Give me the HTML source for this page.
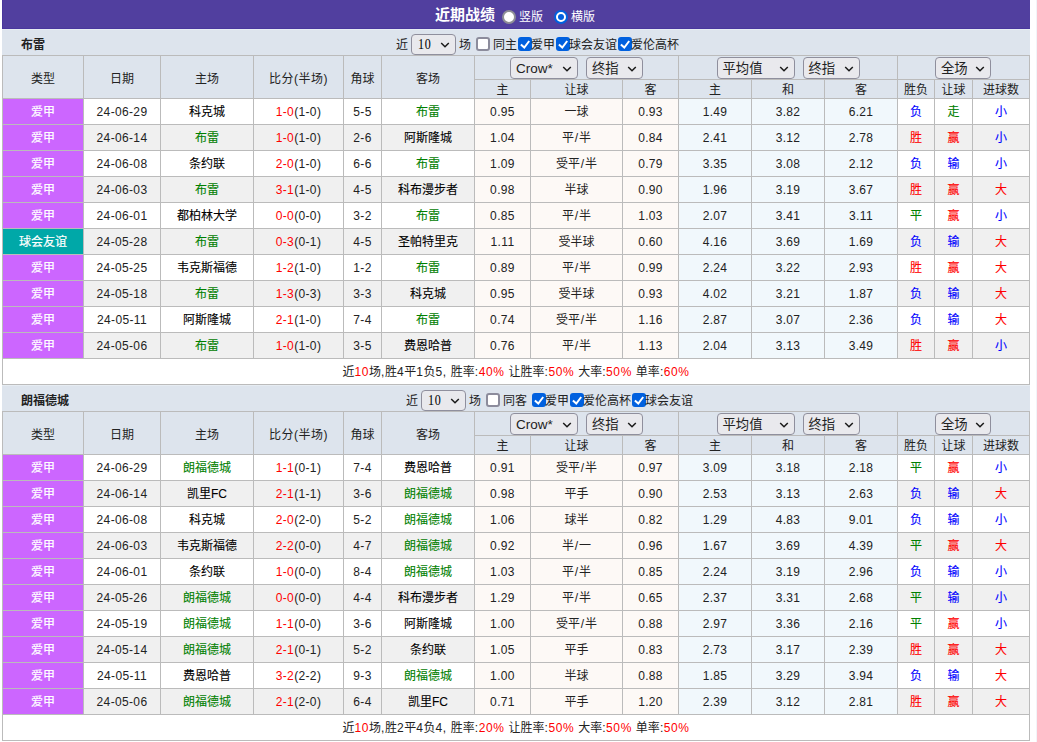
<!DOCTYPE html>
<html lang="zh-CN"><head><meta charset="utf-8"><title>近期战绩</title>
<style>
html,body{margin:0;padding:0;background:#fff;}
body{font-family:"Liberation Sans","Noto Sans CJK SC",sans-serif;font-size:12px;color:#222;width:1037px;height:742px;overflow:hidden;position:relative;}
.wrap{position:absolute;left:2px;top:0;width:1028px;}
.title{height:29px;background:#513f9f;color:#fff;position:relative;box-shadow:inset 1px -1px 0 #49379d;}
.title .tt{position:absolute;left:433px;top:4px;font-size:15px;font-weight:bold;line-height:22px;}
.title .rl{position:absolute;top:8px;font-size:12px;line-height:18px;}
.title .rd{position:absolute;top:10px;width:14px;height:14px;border-radius:50%;background:#fff;box-sizing:border-box;border:2px solid #8e8e96;}
.title .rd.on{border:2px solid #0060df;background:#fff;}
.title .rd.on i{position:absolute;left:2px;top:2px;width:6px;height:6px;border-radius:50%;background:#0060df;}
.team{height:26px;background:linear-gradient(#e6ecf2 0,#e6ecf2 1px,#dde4ed 1px,#dde4ed 100%);position:relative;}
.team .tn{position:absolute;left:19px;top:7px;line-height:18px;font-size:12px;}
.ctl{position:absolute;top:2px;height:26px;display:flex;align-items:center;white-space:nowrap;}
.lb{display:inline-block;line-height:18px;position:relative;top:1px;}
.sel{display:inline-block;box-sizing:border-box;border:1px solid #8f8f9d;border-radius:4px;background:#e9e9ed;position:relative;vertical-align:middle;}
.sel.sm{height:21px;margin:3px 3px 0 3px;align-self:flex-start;}
.sel.big{height:22px;margin-top:1px;}
.sel .st{position:absolute;left:5px;top:0;}
.sel .ar{position:absolute;right:5px;}
.sel.sm .st{line-height:19px;color:#000;font-family:"Liberation Serif","Noto Sans CJK SC",serif;font-size:14px;left:6px;letter-spacing:0.8px;transform:scaleX(0.86);transform-origin:0 50%;}
.sel.sm .ar{top:7px;}
.sel.big .st{line-height:21px;font-size:13.33px;}
.sel.big .st.la{font-size:13.5px;}
.sel.big .ar{top:8px;}
.cb{display:inline-block;width:14px;height:14px;box-sizing:border-box;border:2px solid #8c8c9c;border-radius:3px;background:#fff;vertical-align:middle;margin:0 3px 0 5px;}
.cb.on{border:none;background:#0060df;margin:0 -1px 0 1px;}
.cb svg{display:block;}
table.t{border-collapse:collapse;table-layout:fixed;width:1028px;}
table.t td,table.t th{border:1px solid #bbb;text-align:center;padding:0;font-weight:normal;overflow:hidden;white-space:nowrap;}
table.t th{background:#dde4ed;}
tr.h1{height:24px;}
tr.h2{height:19px;}
tr.h2 th{line-height:16px;padding-top:2px;}
table.t td{height:24px;line-height:24px;padding-top:1px;background:#fff;}
tr.alt td{background:#f0f0f0;}
table.t td.lg1{background:#cc66ff;color:#fff;}
table.t td.lg2{background:#00a8a8;color:#fff;}
table.t td.o1{background:#fdf9f6;}
table.t td.o2{background:#f1f8fc;}
.v,.n{letter-spacing:0.35px;padding-right:1px;}
.g{color:#008000;}
.r{color:#f00;}
.b{color:#00f;}
table.t td.g{color:#008000;}table.t td.r{color:#f00;}table.t td.b{color:#00f;}
tr.sum td{background:#fff;}
.ls{letter-spacing:0.6px;}
th.hs{text-align:center;}
.sel.m2{margin-left:8px;}

.sel.m1{margin-left:-1px;}
.sl{padding:0 0.85px;}
.edge{position:absolute;left:1036px;top:0;width:1px;height:742px;background:#f2f4f8;}
td.tm{color:#000;-webkit-text-stroke:0.1px #000;}
td.tm.g{-webkit-text-stroke:0.1px #008000;}
table.t td.lg1,table.t td.lg2{-webkit-text-stroke:0.2px #fff;}
.hl{letter-spacing:0.5px;}
table.t td.g{-webkit-text-stroke:0.1px #008000;}table.t td.r{-webkit-text-stroke:0.1px #f00;}table.t td.b{-webkit-text-stroke:0.1px #00f;}

</style></head><body>
<div class="wrap">
<div class="title"><span class="tt">近期战绩</span><span class="rd" style="left:500px"></span><span class="rl" style="left:517px">竖版</span><span class="rd on" style="left:552px"><i></i></span><span class="rl" style="left:569px">横版</span></div>
<div class="team "><b class="tn">布雷</b><div class="ctl" style="left:394px"><span class="lb">近</span><span class="sel sm" style="width:45px"><span class="st ">10</span><svg class="ar" viewBox="0 0 10 6" width="10" height="6"><path d="M1.2 1 L5 4.8 L8.8 1" fill="none" stroke="#1a1a1a" stroke-width="1.5"/></svg></span><span class="lb l2">场</span><span class="cb"></span><span class="lb c">同主</span><span class="cb on"><svg viewBox="0 0 14 14" width="14" height="14"><path d="M2.9 7.4 L6.3 10.6 L11.2 4" fill="none" stroke="#fff" stroke-width="2"/></svg></span><span class="lb d">爱甲</span><span class="cb on"><svg viewBox="0 0 14 14" width="14" height="14"><path d="M2.9 7.4 L6.3 10.6 L11.2 4" fill="none" stroke="#fff" stroke-width="2"/></svg></span><span class="lb d">球会友谊</span><span class="cb on"><svg viewBox="0 0 14 14" width="14" height="14"><path d="M2.9 7.4 L6.3 10.6 L11.2 4" fill="none" stroke="#fff" stroke-width="2"/></svg></span><span class="lb d">爱伦高杯</span></div></div><table class="t"><colgroup><col style="width:81px"><col style="width:77px"><col style="width:93px"><col style="width:90px"><col style="width:38px"><col style="width:93px"><col style="width:56px"><col style="width:92px"><col style="width:56px"><col style="width:73px"><col style="width:73px"><col style="width:73px"><col style="width:37px"><col style="width:38px"><col style="width:57px"></colgroup><tr class="h1"><th rowspan="2">类型</th><th rowspan="2">日期</th><th rowspan="2">主场</th><th rowspan="2" class="hl">比分(半场)</th><th rowspan="2">角球</th><th rowspan="2">客场</th><th colspan="3" class="hs"><span class="sel big" style="width:68px"><span class="st la">Crow*</span><svg class="ar" viewBox="0 0 10 6" width="10" height="6"><path d="M1.2 1 L5 4.8 L8.8 1" fill="none" stroke="#1a1a1a" stroke-width="1.5"/></svg></span><span class="sel big m2" style="width:57px"><span class="st ">终指</span><svg class="ar" viewBox="0 0 10 6" width="10" height="6"><path d="M1.2 1 L5 4.8 L8.8 1" fill="none" stroke="#1a1a1a" stroke-width="1.5"/></svg></span></th><th colspan="3" class="hs"><span class="sel big" style="width:78px"><span class="st ">平均值</span><svg class="ar" viewBox="0 0 10 6" width="10" height="6"><path d="M1.2 1 L5 4.8 L8.8 1" fill="none" stroke="#1a1a1a" stroke-width="1.5"/></svg></span><span class="sel big m2" style="width:57px"><span class="st ">终指</span><svg class="ar" viewBox="0 0 10 6" width="10" height="6"><path d="M1.2 1 L5 4.8 L8.8 1" fill="none" stroke="#1a1a1a" stroke-width="1.5"/></svg></span></th><th colspan="3" class="hs"><span class="sel big m1" style="width:56px"><span class="st ">全场</span><svg class="ar" viewBox="0 0 10 6" width="10" height="6"><path d="M1.2 1 L5 4.8 L8.8 1" fill="none" stroke="#1a1a1a" stroke-width="1.5"/></svg></span></th></tr><tr class="h2"><th>主</th><th>让球</th><th>客</th><th>主</th><th>和</th><th>客</th><th>胜负</th><th>让球</th><th>进球数</th></tr><tr class=""><td class="lg1">爱甲</td><td class="n">24-06-29</td><td class="tm">科克城</td><td class="n"><span class="r">1-0</span>(1-0)</td><td class="n">5-5</td><td class="tm g">布雷</td><td class="o1 v">0.95</td><td class="o1">一球</td><td class="o1 v">0.93</td><td class="o2 v">1.49</td><td class="o2 v">3.82</td><td class="o2 v">6.21</td><td class="b">负</td><td class="g">走</td><td class="b">小</td></tr>
<tr class="alt"><td class="lg1">爱甲</td><td class="n">24-06-14</td><td class="tm g">布雷</td><td class="n"><span class="r">1-0</span>(1-0)</td><td class="n">2-6</td><td class="tm">阿斯隆城</td><td class="o1 v">1.04</td><td class="o1">平<span class="sl">/</span>半</td><td class="o1 v">0.84</td><td class="o2 v">2.41</td><td class="o2 v">3.12</td><td class="o2 v">2.78</td><td class="r">胜</td><td class="r">赢</td><td class="b">小</td></tr>
<tr class=""><td class="lg1">爱甲</td><td class="n">24-06-08</td><td class="tm">条约联</td><td class="n"><span class="r">2-0</span>(1-0)</td><td class="n">6-6</td><td class="tm g">布雷</td><td class="o1 v">1.09</td><td class="o1">受平<span class="sl">/</span>半</td><td class="o1 v">0.79</td><td class="o2 v">3.35</td><td class="o2 v">3.08</td><td class="o2 v">2.12</td><td class="b">负</td><td class="b">输</td><td class="b">小</td></tr>
<tr class="alt"><td class="lg1">爱甲</td><td class="n">24-06-03</td><td class="tm g">布雷</td><td class="n"><span class="r">3-1</span>(1-0)</td><td class="n">4-5</td><td class="tm">科布漫步者</td><td class="o1 v">0.98</td><td class="o1">半球</td><td class="o1 v">0.90</td><td class="o2 v">1.96</td><td class="o2 v">3.19</td><td class="o2 v">3.67</td><td class="r">胜</td><td class="r">赢</td><td class="r">大</td></tr>
<tr class=""><td class="lg1">爱甲</td><td class="n">24-06-01</td><td class="tm">都柏林大学</td><td class="n"><span class="r">0-0</span>(0-0)</td><td class="n">3-2</td><td class="tm g">布雷</td><td class="o1 v">0.85</td><td class="o1">平<span class="sl">/</span>半</td><td class="o1 v">1.03</td><td class="o2 v">2.07</td><td class="o2 v">3.41</td><td class="o2 v">3.11</td><td class="g">平</td><td class="r">赢</td><td class="b">小</td></tr>
<tr class="alt"><td class="lg2">球会友谊</td><td class="n">24-05-28</td><td class="tm g">布雷</td><td class="n"><span class="r">0-3</span>(0-1)</td><td class="n">4-5</td><td class="tm">圣帕特里克</td><td class="o1 v">1.11</td><td class="o1">受半球</td><td class="o1 v">0.60</td><td class="o2 v">4.16</td><td class="o2 v">3.69</td><td class="o2 v">1.69</td><td class="b">负</td><td class="b">输</td><td class="r">大</td></tr>
<tr class=""><td class="lg1">爱甲</td><td class="n">24-05-25</td><td class="tm">韦克斯福德</td><td class="n"><span class="r">1-2</span>(1-0)</td><td class="n">1-2</td><td class="tm g">布雷</td><td class="o1 v">0.89</td><td class="o1">平<span class="sl">/</span>半</td><td class="o1 v">0.99</td><td class="o2 v">2.24</td><td class="o2 v">3.22</td><td class="o2 v">2.93</td><td class="r">胜</td><td class="r">赢</td><td class="r">大</td></tr>
<tr class="alt"><td class="lg1">爱甲</td><td class="n">24-05-18</td><td class="tm g">布雷</td><td class="n"><span class="r">1-3</span>(0-3)</td><td class="n">3-3</td><td class="tm">科克城</td><td class="o1 v">0.95</td><td class="o1">受半球</td><td class="o1 v">0.93</td><td class="o2 v">4.02</td><td class="o2 v">3.21</td><td class="o2 v">1.87</td><td class="b">负</td><td class="b">输</td><td class="r">大</td></tr>
<tr class=""><td class="lg1">爱甲</td><td class="n">24-05-11</td><td class="tm">阿斯隆城</td><td class="n"><span class="r">2-1</span>(1-0)</td><td class="n">7-4</td><td class="tm g">布雷</td><td class="o1 v">0.74</td><td class="o1">受平<span class="sl">/</span>半</td><td class="o1 v">1.16</td><td class="o2 v">2.87</td><td class="o2 v">3.07</td><td class="o2 v">2.36</td><td class="b">负</td><td class="b">输</td><td class="r">大</td></tr>
<tr class="alt"><td class="lg1">爱甲</td><td class="n">24-05-06</td><td class="tm g">布雷</td><td class="n"><span class="r">1-0</span>(1-0)</td><td class="n">3-5</td><td class="tm">费恩哈普</td><td class="o1 v">0.76</td><td class="o1">平<span class="sl">/</span>半</td><td class="o1 v">1.13</td><td class="o2 v">2.04</td><td class="o2 v">3.13</td><td class="o2 v">3.49</td><td class="r">胜</td><td class="r">赢</td><td class="b">小</td></tr><tr class="sum"><td colspan="15">近<span class="r ls">10</span>场<span class="ls">,</span>胜<span class="ls">4</span>平<span class="ls">1</span>负<span class="ls">5, </span>胜率<span class="ls">:</span><span class="r ls">40%</span><span class="ls"> </span>让胜率<span class="ls">:</span><span class="r ls">50%</span><span class="ls"> </span>大率<span class="ls">:</span><span class="r ls">50%</span><span class="ls"> </span>单率<span class="ls">:</span><span class="r ls">60%</span></td></tr></table>
<div class="team second"><b class="tn">朗福德城</b><div class="ctl" style="left:404px"><span class="lb">近</span><span class="sel sm" style="width:45px"><span class="st ">10</span><svg class="ar" viewBox="0 0 10 6" width="10" height="6"><path d="M1.2 1 L5 4.8 L8.8 1" fill="none" stroke="#1a1a1a" stroke-width="1.5"/></svg></span><span class="lb l2">场</span><span class="cb"></span><span class="lb c" style="margin-right:4px">同客</span><span class="cb on"><svg viewBox="0 0 14 14" width="14" height="14"><path d="M2.9 7.4 L6.3 10.6 L11.2 4" fill="none" stroke="#fff" stroke-width="2"/></svg></span><span class="lb d">爱甲</span><span class="cb on"><svg viewBox="0 0 14 14" width="14" height="14"><path d="M2.9 7.4 L6.3 10.6 L11.2 4" fill="none" stroke="#fff" stroke-width="2"/></svg></span><span class="lb d">爱伦高杯</span><span class="cb on"><svg viewBox="0 0 14 14" width="14" height="14"><path d="M2.9 7.4 L6.3 10.6 L11.2 4" fill="none" stroke="#fff" stroke-width="2"/></svg></span><span class="lb d">球会友谊</span></div></div><table class="t"><colgroup><col style="width:81px"><col style="width:77px"><col style="width:93px"><col style="width:90px"><col style="width:38px"><col style="width:93px"><col style="width:56px"><col style="width:92px"><col style="width:56px"><col style="width:73px"><col style="width:73px"><col style="width:73px"><col style="width:37px"><col style="width:38px"><col style="width:57px"></colgroup><tr class="h1"><th rowspan="2">类型</th><th rowspan="2">日期</th><th rowspan="2">主场</th><th rowspan="2" class="hl">比分(半场)</th><th rowspan="2">角球</th><th rowspan="2">客场</th><th colspan="3" class="hs"><span class="sel big" style="width:68px"><span class="st la">Crow*</span><svg class="ar" viewBox="0 0 10 6" width="10" height="6"><path d="M1.2 1 L5 4.8 L8.8 1" fill="none" stroke="#1a1a1a" stroke-width="1.5"/></svg></span><span class="sel big m2" style="width:57px"><span class="st ">终指</span><svg class="ar" viewBox="0 0 10 6" width="10" height="6"><path d="M1.2 1 L5 4.8 L8.8 1" fill="none" stroke="#1a1a1a" stroke-width="1.5"/></svg></span></th><th colspan="3" class="hs"><span class="sel big" style="width:78px"><span class="st ">平均值</span><svg class="ar" viewBox="0 0 10 6" width="10" height="6"><path d="M1.2 1 L5 4.8 L8.8 1" fill="none" stroke="#1a1a1a" stroke-width="1.5"/></svg></span><span class="sel big m2" style="width:57px"><span class="st ">终指</span><svg class="ar" viewBox="0 0 10 6" width="10" height="6"><path d="M1.2 1 L5 4.8 L8.8 1" fill="none" stroke="#1a1a1a" stroke-width="1.5"/></svg></span></th><th colspan="3" class="hs"><span class="sel big m1" style="width:56px"><span class="st ">全场</span><svg class="ar" viewBox="0 0 10 6" width="10" height="6"><path d="M1.2 1 L5 4.8 L8.8 1" fill="none" stroke="#1a1a1a" stroke-width="1.5"/></svg></span></th></tr><tr class="h2"><th>主</th><th>让球</th><th>客</th><th>主</th><th>和</th><th>客</th><th>胜负</th><th>让球</th><th>进球数</th></tr><tr class=""><td class="lg1">爱甲</td><td class="n">24-06-29</td><td class="tm g">朗福德城</td><td class="n"><span class="r">1-1</span>(0-1)</td><td class="n">7-4</td><td class="tm">费恩哈普</td><td class="o1 v">0.91</td><td class="o1">受平<span class="sl">/</span>半</td><td class="o1 v">0.97</td><td class="o2 v">3.09</td><td class="o2 v">3.18</td><td class="o2 v">2.18</td><td class="g">平</td><td class="r">赢</td><td class="b">小</td></tr>
<tr class="alt"><td class="lg1">爱甲</td><td class="n">24-06-14</td><td class="tm">凯里FC</td><td class="n"><span class="r">2-1</span>(1-1)</td><td class="n">3-6</td><td class="tm g">朗福德城</td><td class="o1 v">0.98</td><td class="o1">平手</td><td class="o1 v">0.90</td><td class="o2 v">2.53</td><td class="o2 v">3.13</td><td class="o2 v">2.63</td><td class="b">负</td><td class="b">输</td><td class="r">大</td></tr>
<tr class=""><td class="lg1">爱甲</td><td class="n">24-06-08</td><td class="tm">科克城</td><td class="n"><span class="r">2-0</span>(2-0)</td><td class="n">5-2</td><td class="tm g">朗福德城</td><td class="o1 v">1.06</td><td class="o1">球半</td><td class="o1 v">0.82</td><td class="o2 v">1.29</td><td class="o2 v">4.83</td><td class="o2 v">9.01</td><td class="b">负</td><td class="b">输</td><td class="b">小</td></tr>
<tr class="alt"><td class="lg1">爱甲</td><td class="n">24-06-03</td><td class="tm">韦克斯福德</td><td class="n"><span class="r">2-2</span>(0-0)</td><td class="n">4-7</td><td class="tm g">朗福德城</td><td class="o1 v">0.92</td><td class="o1">半<span class="sl">/</span>一</td><td class="o1 v">0.96</td><td class="o2 v">1.67</td><td class="o2 v">3.69</td><td class="o2 v">4.39</td><td class="g">平</td><td class="r">赢</td><td class="r">大</td></tr>
<tr class=""><td class="lg1">爱甲</td><td class="n">24-06-01</td><td class="tm">条约联</td><td class="n"><span class="r">1-0</span>(0-0)</td><td class="n">8-4</td><td class="tm g">朗福德城</td><td class="o1 v">1.03</td><td class="o1">平<span class="sl">/</span>半</td><td class="o1 v">0.85</td><td class="o2 v">2.24</td><td class="o2 v">3.19</td><td class="o2 v">2.96</td><td class="b">负</td><td class="b">输</td><td class="b">小</td></tr>
<tr class="alt"><td class="lg1">爱甲</td><td class="n">24-05-26</td><td class="tm g">朗福德城</td><td class="n"><span class="r">0-0</span>(0-0)</td><td class="n">4-4</td><td class="tm">科布漫步者</td><td class="o1 v">1.29</td><td class="o1">平<span class="sl">/</span>半</td><td class="o1 v">0.65</td><td class="o2 v">2.37</td><td class="o2 v">3.31</td><td class="o2 v">2.68</td><td class="g">平</td><td class="b">输</td><td class="b">小</td></tr>
<tr class=""><td class="lg1">爱甲</td><td class="n">24-05-19</td><td class="tm g">朗福德城</td><td class="n"><span class="r">1-1</span>(0-0)</td><td class="n">3-6</td><td class="tm">阿斯隆城</td><td class="o1 v">1.00</td><td class="o1">受平<span class="sl">/</span>半</td><td class="o1 v">0.88</td><td class="o2 v">2.97</td><td class="o2 v">3.36</td><td class="o2 v">2.16</td><td class="g">平</td><td class="r">赢</td><td class="b">小</td></tr>
<tr class="alt"><td class="lg1">爱甲</td><td class="n">24-05-14</td><td class="tm g">朗福德城</td><td class="n"><span class="r">2-1</span>(0-1)</td><td class="n">5-2</td><td class="tm">条约联</td><td class="o1 v">1.05</td><td class="o1">平手</td><td class="o1 v">0.83</td><td class="o2 v">2.73</td><td class="o2 v">3.17</td><td class="o2 v">2.39</td><td class="r">胜</td><td class="r">赢</td><td class="r">大</td></tr>
<tr class=""><td class="lg1">爱甲</td><td class="n">24-05-11</td><td class="tm">费恩哈普</td><td class="n"><span class="r">3-2</span>(2-2)</td><td class="n">9-3</td><td class="tm g">朗福德城</td><td class="o1 v">1.00</td><td class="o1">半球</td><td class="o1 v">0.88</td><td class="o2 v">1.85</td><td class="o2 v">3.29</td><td class="o2 v">3.94</td><td class="b">负</td><td class="b">输</td><td class="r">大</td></tr>
<tr class="alt"><td class="lg1">爱甲</td><td class="n">24-05-06</td><td class="tm g">朗福德城</td><td class="n"><span class="r">2-1</span>(2-0)</td><td class="n">6-4</td><td class="tm">凯里FC</td><td class="o1 v">0.71</td><td class="o1">平手</td><td class="o1 v">1.20</td><td class="o2 v">2.39</td><td class="o2 v">3.12</td><td class="o2 v">2.81</td><td class="r">胜</td><td class="r">赢</td><td class="r">大</td></tr><tr class="sum"><td colspan="15">近<span class="r ls">10</span>场<span class="ls">,</span>胜<span class="ls">2</span>平<span class="ls">4</span>负<span class="ls">4, </span>胜率<span class="ls">:</span><span class="r ls">20%</span><span class="ls"> </span>让胜率<span class="ls">:</span><span class="r ls">50%</span><span class="ls"> </span>大率<span class="ls">:</span><span class="r ls">50%</span><span class="ls"> </span>单率<span class="ls">:</span><span class="r ls">50%</span></td></tr></table>
</div>
<div class="edge"></div>
</body></html>
